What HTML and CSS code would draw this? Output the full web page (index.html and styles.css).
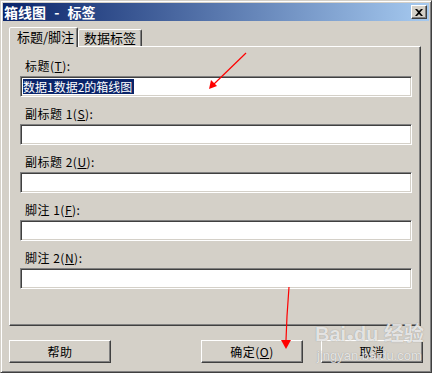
FILE: index.html
```html
<!DOCTYPE html>
<html lang="zh-CN">
<head>
  <meta charset="UTF-8" />
  <title>箱线图 - 标签</title>
  <link rel="stylesheet" href="styles.css">
</head>
<body>
  <div class="window">
    <div class="titlebar">
      <span class="title">箱线图 - 标签</span>
      <button class="close">
        <svg width="8" height="7" viewBox="0 0 8 7"><path d="M0 0h2l2 2 2-2h2L5 3.5 8 7H6L4 5 2 7H0l3-3.5z" fill="#000"/></svg>
      </button>
    </div>

    <div class="content">
      <div class="tabs">
        <div class="tab active">标题/脚注</div>
        <div class="tab">数据标签</div>
      </div>

      <div class="panel">
        <div class="field">
          <label>标题(<u>T</u>):</label>
          <div class="textbox"><span class="selected">数据1数据2的箱线图</span></div>
        </div>
        <div class="field">
          <label>副标题 1(<u>S</u>):</label>
          <div class="textbox"></div>
        </div>
        <div class="field">
          <label>副标题 2(<u>U</u>):</label>
          <div class="textbox"></div>
        </div>
        <div class="field">
          <label>脚注 1(<u>F</u>):</label>
          <div class="textbox"></div>
        </div>
        <div class="field">
          <label>脚注 2(<u>N</u>):</label>
          <div class="textbox"></div>
        </div>
      </div>

      <div class="buttons">
        <button class="btn">帮助</button>
        <button class="btn ok">确定(<u>O</u>)</button>
        <button class="btn">取消</button>
      </div>
    </div>

    <!-- annotations drawn over the screenshot -->
    <svg class="arrows" width="432" height="373" viewBox="0 0 432 373">
      <path d="M246 53 L214 84" stroke="#f00" stroke-width="1.2" fill="none"/>
      <path d="M209 89 L211 80 L217 86 Z" fill="#f00"/>
      <path d="M289 287 L287 316 L286 340" stroke="#f00" stroke-width="1.2" fill="none"/>
      <path d="M281 340 L291 340 L286 349 Z" fill="#f00"/>
    </svg>

    <div class="watermark">
      <div class="wm-logo">Bai<span class="paw">●</span>du 经验</div>
      <div class="wm-url">jingyan.baidu.com</div>
    </div>
  </div>
</body>
</html>
```

FILE: styles.css
```css
* {
  box-sizing: border-box;
  margin: 0;
  padding: 0;
}
body {
  width: 432px;
  height: 373px;
  background: #d4d0c8;
  font-family: "Noto Sans CJK SC", "DejaVu Sans", sans-serif;
  font-size: 12px;
  color: #000;
  overflow: hidden;
}
.window {
  position: relative;
  width: 432px;
  height: 373px;
  background: #d4d0c8;
  border: 1px solid;
  border-color: #d4d0c8 #404040 #404040 #d4d0c8;
  box-shadow: inset 1px 1px #fff, inset -1px -1px #808080;
  padding: 2px;
}
.titlebar {
  height: 18px;
  display: flex;
  align-items: center;
  justify-content: space-between;
  padding: 0 2px 0 1px;
  background: linear-gradient(to right, #0a246a, #a6caf0);
}
.title {
  color: #fff;
  font-weight: bold;
  font-size: 14px;
  line-height: 18px;
  word-spacing: 5px;
}
.close {
  width: 16px;
  height: 14px;
  display: flex;
  align-items: center;
  justify-content: center;
  background: #d4d0c8;
  border: 1px solid;
  border-color: #fff #404040 #404040 #fff;
  box-shadow: inset -1px -1px #808080;
}
.content {
  padding: 6px 0 0 6px;
}
.tabs {
  display: flex;
  align-items: flex-end;
  height: 19px;
  position: relative;
  z-index: 1;
}
.tab {
  height: 17px;
  padding: 0 5px 0 5px;
  line-height: 16px;
  white-space: nowrap;
  font-size: 13px;
  border: 1px solid;
  border-bottom: none;
  border-color: #fff #404040 transparent #fff;
  box-shadow: inset -1px 0 #808080;
  border-radius: 2px 2px 0 0;
  background: #d4d0c8;
}
.tab.active {
  height: 20px;
  width: 69px;
  margin-bottom: -1px;
  padding: 0 0 0 7px;
  line-height: 18px;
}
.panel {
  width: 412px;
  height: 280px;
  border: 1px solid;
  border-color: #fff #404040 #404040 #fff;
  box-shadow: inset -1px -1px #808080;
  padding: 8px 8px 0 10px;
}
.field {
  height: 48px;
  display: flex;
  flex-direction: column;
}
.field label {
  height: 21px;
  padding: 4px 0 0 5px;
  line-height: 14px;
  letter-spacing: 0.5px;
}
.textbox {
  height: 21px;
  width: 392px;
  background: #fff;
  border: 1px solid;
  border-color: #808080 #fff #fff #808080;
  box-shadow: inset 1px 1px #404040, inset -1px -1px #d4d0c8;
  padding: 2px 0 0 2px;
  line-height: 15px;
}
.selected {
  display: inline-block;
  background: #0a246a;
  color: #fff;
  height: 15px;
  padding-right: 2px;
  font-size: 12px;
}
.buttons {
  display: flex;
  margin-top: 14px;
}
.btn {
  width: 102px;
  height: 23px;
  font-family: inherit;
  font-size: 12px;
  background: #d4d0c8;
  border: 1px solid;
  border-color: #fff #404040 #404040 #fff;
  box-shadow: inset -1px -1px #808080;
  letter-spacing: 0.5px;
}
.btn.ok {
  margin-left: 90px;
  margin-right: 18px;
}
.arrows {
  position: absolute;
  left: -1px;
  top: -1px;
  pointer-events: none;
}
.watermark {
  position: absolute;
  left: 314px;
  top: 321px;
  color: rgba(255, 255, 255, 0.75);
  font-family: "Liberation Sans", "Noto Sans CJK SC", sans-serif;
  text-shadow: 0 0 1px rgba(110, 110, 110, 0.7);
  pointer-events: none;
}
.wm-logo {
  font-size: 20px;
  font-weight: bold;
  line-height: 24px;
}
.paw {
  font-size: 13px;
}
.wm-url {
  font-size: 13px;
  line-height: 14px;
  margin-left: 2px;
}
```
